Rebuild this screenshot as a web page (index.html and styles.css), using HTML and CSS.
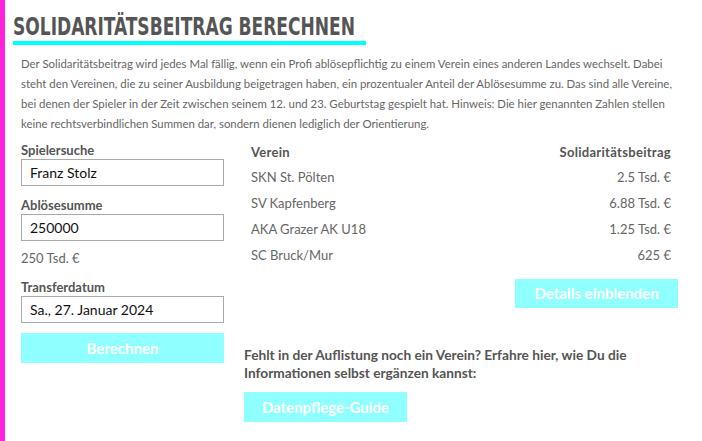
FILE: index.html
```html
<!DOCTYPE html>
<html lang="de">
<head>
<meta charset="utf-8">
<link rel="stylesheet" href="styles.css">
</head>
<body>
<div class="page">
  <h1 class="title"><span>Solidaritätsbeitrag berechnen</span></h1>
  <div class="content">
    <p class="intro">Der Solidaritätsbeitrag wird jedes Mal fällig, wenn ein Profi ablösepflichtig zu einem Verein eines anderen Landes wechselt. Dabei<br>steht den Vereinen, die zu seiner Ausbildung beigetragen haben, ein prozentualer Anteil der Ablösesumme zu. Das sind alle Vereine,<br>bei denen der Spieler in der Zeit zwischen seinem 12. und 23. Geburtstag gespielt hat. Hinweis: Die hier genannten Zahlen stellen<br>keine rechtsverbindlichen Summen dar, sondern dienen lediglich der Orientierung.</p>
    <div class="columns">
      <div class="form">
        <div class="field">
          <label class="label">Spielersuche</label>
          <div class="input">Franz Stolz</div>
        </div>
        <div class="field">
          <label class="label">Ablösesumme</label>
          <div class="input">250000</div>
        </div>
        <div class="hint">250 Tsd. €</div>
        <div class="field">
          <label class="label">Transferdatum</label>
          <div class="input">Sa., 27. Januar 2024</div>
        </div>
        <div class="btn btn-full">Berechnen</div>
      </div>
      <div class="results">
        <table class="table">
          <thead>
            <tr><th class="left">Verein</th><th class="right">Solidaritätsbeitrag</th></tr>
          </thead>
          <tbody>
            <tr><td>SKN St. Pölten</td><td class="right">2.5 Tsd. €</td></tr>
            <tr><td>SV Kapfenberg</td><td class="right">6.88 Tsd. €</td></tr>
            <tr><td>AKA Grazer AK U18</td><td class="right">1.25 Tsd. €</td></tr>
            <tr><td>SC Bruck/Mur</td><td class="right">625 €</td></tr>
          </tbody>
        </table>
        <div class="details-row"><div class="btn btn-details">Details einblenden</div></div>
        <p class="missing">Fehlt in der Auflistung noch ein Verein? Erfahre hier, wie Du die Informationen selbst ergänzen kannst:</p>
        <div class="btn btn-guide">Datenpflege-Guide</div>
      </div>
    </div>
  </div>
</div>
</body>
</html>
```
FILE: styles.css
```css
html, body {
  margin: 0;
  padding: 0;
  background: #fff;
}
body {
  font-family: "Lato", "Open Sans", sans-serif;
  color: #666;
}
.page {
  border-left: 5px solid #ff22dd;
  min-height: 441px;
  box-sizing: border-box;
  padding: 13px 0 0 8px;
}
.title {
  margin: 0;
  height: 32px;
  font-family: "Liberation Sans Narrow", "DejaVu Sans Condensed", sans-serif;
  font-weight: bold;
  font-size: 24px;
  line-height: 28px;
  text-transform: uppercase;
  color: #555;
}
.title span {
  display: inline-block;
  padding-right: 14px;
  border-bottom: 4px solid #00ffff;
  line-height: 28px;
  transform: scaleX(0.79);
  transform-origin: left top;
}
.content {
  padding-left: 8px;
}
.intro {
  margin: 9px 0 0 0;
  font-size: 11.4px;
  line-height: 20px;
  color: #666;
  white-space: nowrap;
}
.columns {
  display: flex;
  gap: 20px;
  margin-top: 8px;
}
.form {
  width: 203px;
}
.field {
  margin-bottom: 11px;
}
.label {
  display: block;
  font-size: 13px;
  line-height: 17px;
  font-weight: bold;
  color: #555;
}
.input {
  height: 27px;
  box-sizing: border-box;
  border: 1px solid #aaa;
  padding: 0 8px;
  font-size: 14px;
  line-height: 25px;
  color: #111;
}
.hint {
  font-size: 13px;
  line-height: 18px;
  margin: -3px 0 12px 0;
  color: #666;
}
.btn {
  background: #8fffff;
  color: #fff;
  font-weight: bold;
  font-size: 15px;
  height: 30px;
  line-height: 30px;
  text-align: center;
}
.btn-full {
  margin-top: -1px;
}
.results {
  width: 434px;
}
.table {
  width: 100%;
  margin-top: -2px;
  border-collapse: collapse;
  font-size: 13px;
}
.table th {
  font-weight: bold;
  color: #555;
  padding: 4px 7px;
  line-height: 16px;
  letter-spacing: 0.3px;
}
.table td {
  padding: 5px 7px;
  line-height: 16px;
  color: #666;
}
.left { text-align: left; }
.right { text-align: right; }
.details-row {
  display: flex;
  justify-content: flex-end;
  margin-top: 11px;
}
.btn-details {
  width: 163px;
  height: 29px;
  line-height: 29px;
}
.missing {
  margin: 38px 0 0 0;
  font-size: 13.7px;
  line-height: 18px;
  font-weight: bold;
  color: #555;
}
.btn-guide {
  width: 163px;
  margin-top: 10px;
}
```
